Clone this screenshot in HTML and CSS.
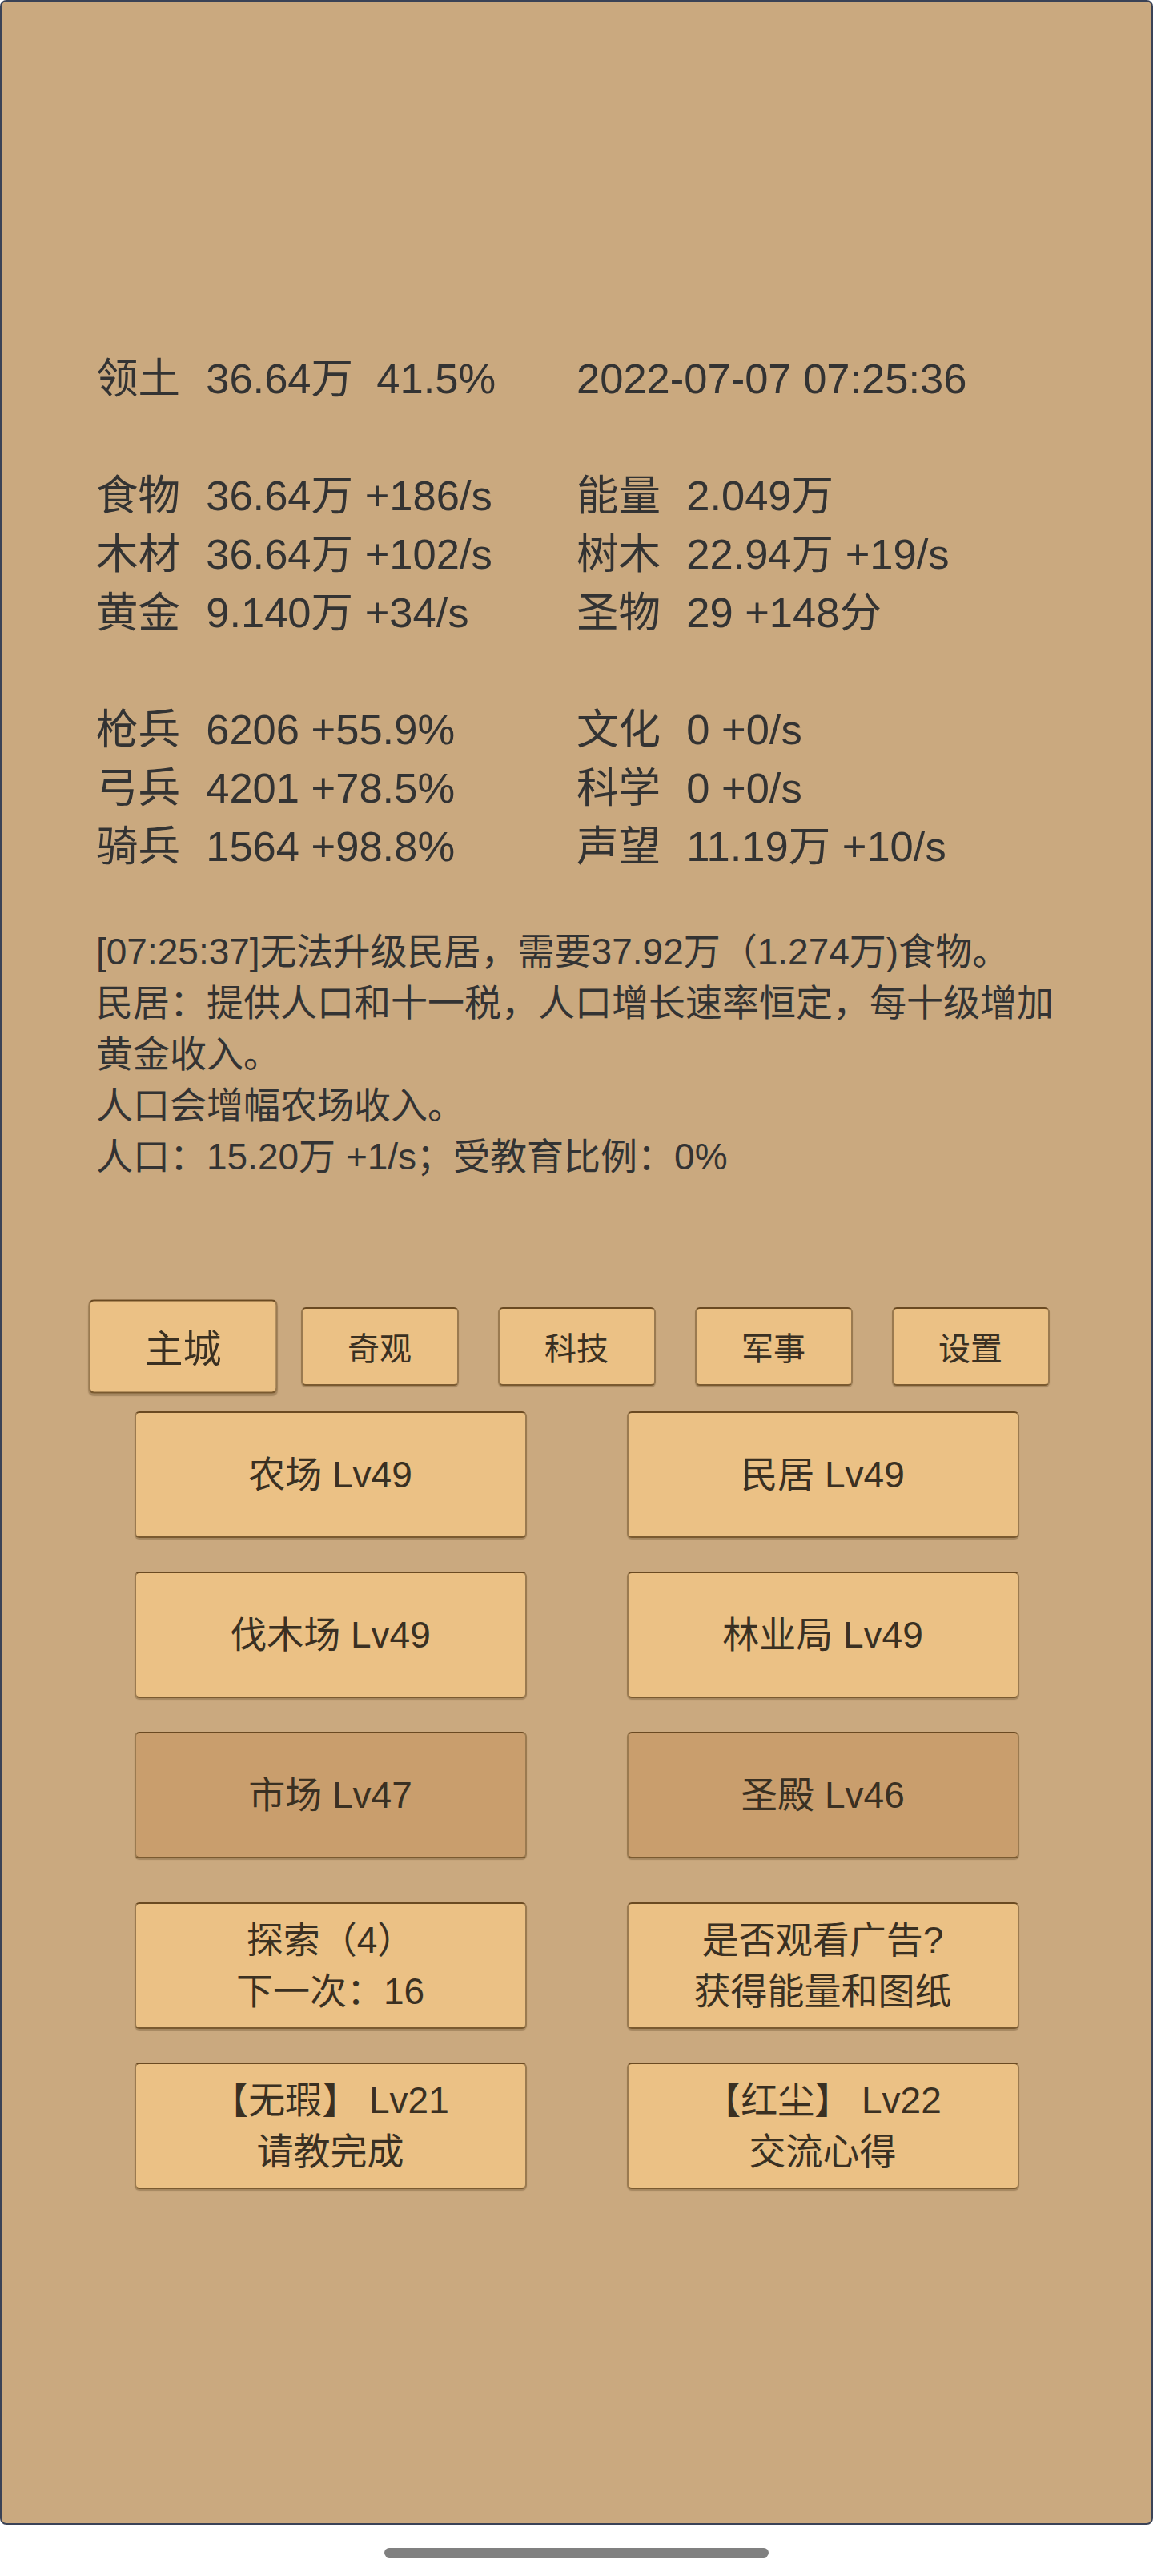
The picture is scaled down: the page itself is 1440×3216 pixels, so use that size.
FILE: index.html
```html
<!DOCTYPE html>
<html lang="zh-CN">
<head>
<meta charset="utf-8">
<title>主城</title>
<link rel="stylesheet" href="styles.css">
</head>
<body>
<div class="screen">
  <div class="stats">
    <div class="cell"><span class="lbl">领土</span>  36.64万  41.5%</div>
    <div class="cell">2022-07-07 07:25:36</div>
    <div class="cell gap"><span class="lbl">食物</span>  36.64万 +186/s</div>
    <div class="cell gap"><span class="lbl">能量</span>  2.049万</div>
    <div class="cell"><span class="lbl">木材</span>  36.64万 +102/s</div>
    <div class="cell"><span class="lbl">树木</span>  22.94万 +19/s</div>
    <div class="cell"><span class="lbl">黄金</span>  9.140万 +34/s</div>
    <div class="cell"><span class="lbl">圣物</span>  29 +148分</div>
    <div class="cell gap"><span class="lbl">枪兵</span>  6206 +55.9%</div>
    <div class="cell gap"><span class="lbl">文化</span>  0 +0/s</div>
    <div class="cell"><span class="lbl">弓兵</span>  4201 +78.5%</div>
    <div class="cell"><span class="lbl">科学</span>  0 +0/s</div>
    <div class="cell"><span class="lbl">骑兵</span>  1564 +98.8%</div>
    <div class="cell"><span class="lbl">声望</span>  11.19万 +10/s</div>
  </div>

  <div class="message">
    <p>[07:25:37]无法升级民居，需要37.92万（1.274万)食物。</p>
    <p>民居：提供人口和十一税，人口增长速率恒定，每十级增加黄金收入。</p>
    <p>人口会增幅农场收入。</p>
    <p>人口：15.20万 +1/s；受教育比例：0%</p>
  </div>

  <div class="tabs">
    <div class="tab-cell"><button class="tab active">主城</button></div>
    <div class="tab-cell"><button class="tab">奇观</button></div>
    <div class="tab-cell"><button class="tab">科技</button></div>
    <div class="tab-cell"><button class="tab">军事</button></div>
    <div class="tab-cell"><button class="tab">设置</button></div>
  </div>

  <div class="buildings">
    <div class="b-cell"><button class="btn">农场 Lv49</button></div>
    <div class="b-cell"><button class="btn">民居 Lv49</button></div>
    <div class="b-cell"><button class="btn">伐木场 Lv49</button></div>
    <div class="b-cell"><button class="btn">林业局 Lv49</button></div>
    <div class="b-cell"><button class="btn dim">市场 Lv47</button></div>
    <div class="b-cell"><button class="btn dim">圣殿 Lv46</button></div>
  </div>

  <div class="buildings actions">
    <div class="b-cell"><button class="btn">探索（4）<br>下一次：16</button></div>
    <div class="b-cell"><button class="btn">是否观看广告?<br>获得能量和图纸</button></div>
    <div class="b-cell"><button class="btn">【无瑕】 Lv21<br>请教完成</button></div>
    <div class="b-cell"><button class="btn">【红尘】 Lv22<br>交流心得</button></div>
  </div>
</div>
<div class="home-area">
  <div class="home-bar"></div>
</div>
</body>
</html>
```

FILE: styles.css
```css
html, body {
  margin: 0;
  padding: 0;
  background: #ffffff;
}

body {
  width: 1440px;
  height: 3216px;
  overflow: hidden;
  font-family: "Liberation Sans", "Noto Sans CJK SC", sans-serif;
  color: #333333;
}

.screen {
  box-sizing: border-box;
  width: 1440px;
  height: 3152px;
  background: #caa97f;
  border: 2px solid #3a4256;
  border-radius: 8px;
  padding-top: 434px;
}

.stats {
  display: grid;
  grid-template-columns: 600px 600px;
  margin-left: 118px;
  font-size: 52.5px;
  line-height: 73px;
}

.cell {
  white-space: pre;
}

.lbl {
  margin-right: 3px;
}

.cell.gap {
  margin-top: 73px;
}

.message {
  margin: 63px 0 0 118px;
  width: 1200px;
  font-size: 46px;
  line-height: 64px;
}

.message p {
  margin: 0;
}

.tabs {
  display: grid;
  grid-template-columns: repeat(5, 246px);
  margin: 156px 0 0 103px;
  height: 98px;
}

.tab-cell {
  display: flex;
  justify-content: center;
  align-items: center;
}

button {
  font-family: "Liberation Sans", "Noto Sans CJK SC", sans-serif;
  color: #3a3022;
  background: #ebc185;
  border: 2px solid #7a5a30;
  border-top-color: #6a4a22;
  border-left-color: #9a7a50;
  border-right-color: #9a7a50;
  border-radius: 6px;
  box-shadow: 0 2px 1px rgba(80, 55, 25, 0.3);
  padding: 0;
  margin: 0;
}

.tab {
  width: 197px;
  height: 98px;
  font-size: 40px;
}

.tab.active {
  transform: scale(1.2);
}

.buildings {
  display: grid;
  grid-template-columns: 615px 615px;
  row-gap: 42px;
  margin: 32px 0 0 103px;
}

.buildings.actions {
  margin-top: 55px;
}

.b-cell {
  display: flex;
  justify-content: center;
}

.btn {
  width: 490px;
  height: 158px;
  font-size: 46px;
  line-height: 64px;
}

.btn.dim {
  background: #c99e6d;
}

.home-area {
  height: 64px;
  display: flex;
  justify-content: center;
  padding-top: 29px;
  box-sizing: border-box;
}

.home-bar {
  width: 480px;
  height: 12px;
  border-radius: 6px;
  background: #808080;
}
```
